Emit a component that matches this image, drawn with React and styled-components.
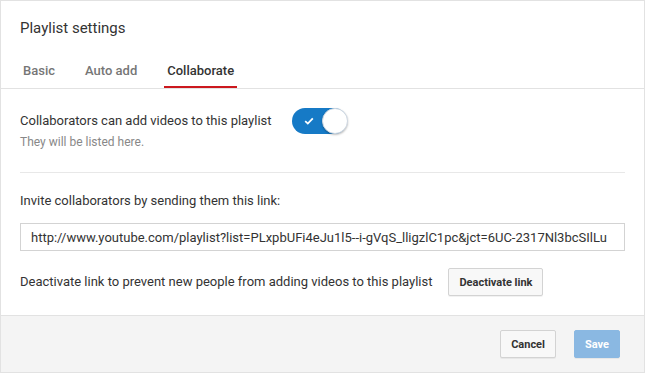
import React from "react";
import styled, { createGlobalStyle } from "styled-components";

const GlobalStyle = createGlobalStyle`
  html, body {
    margin: 0;
    padding: 0;
    background: #fff;
  }
  * {
    box-sizing: border-box;
  }
`;

const Dialog = styled.div`
  width: 645px;
  height: 373px;
  display: flex;
  flex-direction: column;
  border: 1px solid #e2e2e2;
  font-family: Roboto, "Liberation Sans", Arial, sans-serif;
  color: #333;
  background: #fff;
`;

const Body = styled.div`
  flex: 1;
`;

const Header = styled.div`
  padding: 18px 19px 0;
`;

const Title = styled.h2`
  margin: 0;
  font-size: 15px;
  line-height: 19px;
  font-weight: 400;
  color: #333;
`;

const TabBar = styled.div`
  display: flex;
  gap: 24px;
  margin-top: 17px;
  padding: 0 19px;
  border-bottom: 1px solid #e2e2e2;
`;

const Tab = styled.div`
  padding: 8px 3px 7px;
  font-size: 13px;
  line-height: 16px;
  font-weight: 500;
  color: ${(p) => (p.active ? "#333" : "#767676")};
  border-bottom: 2px solid ${(p) => (p.active ? "#cc181e" : "transparent")};
`;

const Content = styled.div`
  padding: 18px 19px 0;
`;

const SettingRow = styled.div`
  display: flex;
  align-items: center;
  gap: 20px;
  height: 28px;
`;

const Label = styled.div`
  font-size: 13px;
  line-height: 16px;
  color: #333;
`;

const Hint = styled.div`
  font-size: 12px;
  line-height: 14px;
  color: #888;
`;

const Toggle = styled.div`
  position: relative;
  width: 57px;
  height: 28px;
  display: flex;
  align-items: center;
`;

const Track = styled.div`
  width: 55px;
  height: 26px;
  border-radius: 13px;
  background: #167ac6;
  display: flex;
  align-items: center;
  padding-left: 12px;
`;

const Knob = styled.div`
  position: absolute;
  right: 1px;
  top: 1px;
  width: 26px;
  height: 26px;
  border-radius: 50%;
  background: #fff;
  border: 1px solid #cfd8e2;
  box-shadow: 0 1px 2px rgba(0, 0, 0, 0.25);
`;

const Divider = styled.div`
  height: 1px;
  margin-top: 23px;
  background: #e8e8e8;
`;

const Section = styled.div`
  margin-top: ${(p) => p.gap}px;
`;

const LinkBox = styled.div`
  height: 28px;
  border: 1px solid #d3d3d3;
  padding: 0 10px;
  display: flex;
  align-items: center;
  font-size: 13px;
  color: #333;
  white-space: nowrap;
  overflow: hidden;
`;

const ActionRow = styled.div`
  display: flex;
  align-items: center;
  gap: 16px;
`;

const Button = styled.button`
  height: 28px;
  padding: 0 10px;
  font-family: Roboto, "Liberation Sans", Arial, sans-serif;
  font-size: 11px;
  font-weight: 700;
  border-radius: 2px;
  border: 1px solid ${(p) => (p.primary ? "#8ab8e2" : "#d3d3d3")};
  background: ${(p) => (p.primary ? "#8ab8e2" : "#f8f8f8")};
  color: ${(p) => (p.primary ? "#fff" : "#333")};
  box-shadow: 0 1px 0 rgba(0, 0, 0, 0.05);
  cursor: pointer;
`;

const Footer = styled.div`
  height: 57px;
  background: #f4f4f4;
  border-top: 1px solid #e2e2e2;
  display: flex;
  justify-content: flex-end;
  align-items: flex-start;
  gap: 18px;
  padding: 14px 24px 0 0;
`;

const Check = () => (
  <svg width="10" height="8" viewBox="0 0 10 8">
    <polyline
      points="1.2,4.2 3.8,6.6 8.8,1.4"
      fill="none"
      stroke="#fff"
      strokeWidth="1.8"
    />
  </svg>
);

const link =
  "http://www.youtube.com/playlist?list=PLxpbUFi4eJu1l5--i-gVqS_lligzlC1pc&jct=6UC-2317Nl3bcSIlLu";

export default function App() {
  return (
    <>
      <GlobalStyle />
      <Dialog>
        <Body>
          <Header>
            <Title>Playlist settings</Title>
          </Header>
          <TabBar>
            <Tab>Basic</Tab>
            <Tab>Auto add</Tab>
            <Tab active>Collaborate</Tab>
          </TabBar>
          <Content>
            <SettingRow>
              <Label>Collaborators can add videos to this playlist</Label>
              <Toggle>
                <Track>
                  <Check />
                </Track>
                <Knob />
              </Toggle>
            </SettingRow>
            <Hint>They will be listed here.</Hint>
            <Divider />
            <Section gap={20}>
              <Label>Invite collaborators by sending them this link:</Label>
            </Section>
            <Section gap={14}>
              <LinkBox>{link}</LinkBox>
            </Section>
            <Section gap={17}>
              <ActionRow>
                <Label>
                  Deactivate link to prevent new people from adding videos to
                  this playlist
                </Label>
                <Button>Deactivate link</Button>
              </ActionRow>
            </Section>
          </Content>
        </Body>
        <Footer>
          <Button>Cancel</Button>
          <Button primary>Save</Button>
        </Footer>
      </Dialog>
    </>
  );
}
